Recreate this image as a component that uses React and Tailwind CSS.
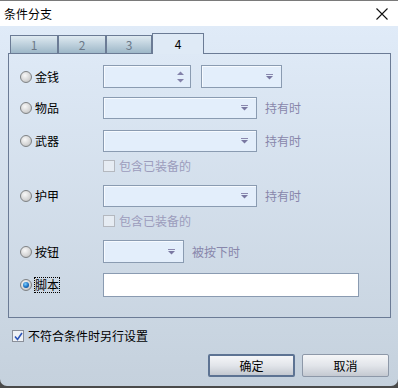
const font = "font-['Noto_Sans_CJK_SC','Microsoft_YaHei',sans-serif]";

function Radio({ checked }) {
  return (
    <span className="relative w-[12px] h-[12px] rounded-full border border-[#7f8284] bg-[radial-gradient(circle_at_40%_35%,#f8f8f8_0%,#d4d4d4_60%,#b0b0b0_100%)] flex items-center justify-center">
      {checked && (
        <span className="w-[6px] h-[6px] rounded-full bg-[radial-gradient(circle_at_40%_35%,#7fd0ff_0%,#1a6fc0_55%,#0c3d7a_100%)]" />
      )}
    </span>
  );
}

function Arrow() {
  return (
    <svg width="9" height="6" viewBox="0 0 9 6" className="shrink-0">
      <rect x="1" y="0" width="7" height="1" fill="#8a88ae" />
      <path d="M1 2 L8 2 L4.5 5.5 Z" fill="#7a78a2" />
    </svg>
  );
}

function Dropdown({ w }) {
  return (
    <div
      className={`${w} h-full border border-[#8a9bb1] bg-[#e3eefb] shadow-[inset_1px_1px_0_#f6faff] flex items-center justify-end pr-[7px]`}
    >
      <Arrow />
    </div>
  );
}

function Spinner() {
  return (
    <div className="w-[88px] h-full border border-[#8a9bb1] bg-[#e3eefb] shadow-[inset_1px_1px_0_#f6faff] flex flex-col items-end justify-center pr-[6px] gap-[4px]">
      <svg width="7" height="4" viewBox="0 0 7 4">
        <path d="M0 4 L7 4 L3.5 0.5 Z" fill="#8482aa" />
      </svg>
      <svg width="7" height="4" viewBox="0 0 7 4">
        <path d="M0 0 L7 0 L3.5 3.5 Z" fill="#8482aa" />
      </svg>
    </div>
  );
}

function Hint({ children }) {
  return <span className="text-[12px] leading-none text-[#8886ab]">{children}</span>;
}

function Row({ label, checked, mt, h, children }) {
  return (
    <div className={`flex items-center ${mt} ${h}`}>
      <div className="w-[94px] pl-[11px] flex items-center gap-[3px] h-full">
        <Radio checked={checked} />
        <span
          className={`text-[12px] leading-[14px] text-black ${
            checked ? 'outline outline-1 outline-dotted outline-black' : ''
          }`}
        >
          {label}
        </span>
      </div>
      <div className="flex items-center h-full gap-[8px]">{children}</div>
    </div>
  );
}

function SubCheck({ mt }) {
  return (
    <div className={`flex items-center ${mt} h-[12px] pl-[94px] gap-[4px]`}>
      <span className="w-[12px] h-[12px] border border-[#b4b8bf] bg-[#e6ecf3]" />
      <span className="text-[12px] leading-none text-[#9c9cbc]">包含已装备的</span>
    </div>
  );
}

function Tab({ w, label, active }) {
  if (active) {
    return (
      <div
        className={`${w} h-[21px] -mb-px relative z-10 border border-b-0 border-[#6b7b95] bg-[#dfeaf6] flex items-center justify-center text-[12px] text-black`}
      >
        {label}
      </div>
    );
  }
  return (
    <div
      className={`${w} h-[18px] border border-b-0 border-[#6b7b95] bg-gradient-to-b from-[#dfeaf1] to-[#9db7c8] flex items-center justify-center text-[12px] text-[#6b7888]`}
    >
      {label}
    </div>
  );
}

function Button({ label, primary }) {
  return (
    <div
      className={`w-[87px] h-[23px] rounded-[2px] flex items-center justify-center text-[12px] text-black bg-gradient-to-b from-[#f5f6f8] via-[#e2e5ea] to-[#c4c9d1] ${
        primary ? 'border-2 border-[#5d7393]' : 'border border-[#8d98a8]'
      }`}
    >
      {label}
    </div>
  );
}

export default function App() {
  return (
    <div className={`w-[398px] h-[388px] bg-[#4a4a4a] ${font}`}>
      <div className="w-[398px] h-[386px] flex flex-col border-t border-[#7a7a7a] rounded-b-[7px] overflow-hidden">
        <div className="h-[25px] bg-white flex items-center justify-between pl-[4px] pr-[10px]">
          <span className="text-[12px] text-black leading-none">条件分支</span>
          <svg width="12" height="12" viewBox="0 0 12 12">
            <path d="M0.5 0.5 L11.5 11.5 M11.5 0.5 L0.5 11.5" stroke="#111" strokeWidth="1.1" />
          </svg>
        </div>
        <div className="flex-1 bg-gradient-to-b from-[#e0ebf8] to-[#c5d1dd] pl-[8px] pt-[7px] flex flex-col">
          <div className="flex items-end ml-[2px] h-[20px]">
            <Tab w="w-[48px]" label="1" />
            <Tab w="w-[48px]" label="2" />
            <Tab w="w-[46px]" label="3" />
            <Tab w="w-[52px]" label="4" active />
          </div>
          <div className="w-[383px] h-[265px] border border-[#6b7b95] flex flex-col">
            <Row label="金钱" mt="mt-[11px]" h="h-[23px]">
              <Spinner />
              <div className="ml-[2px] h-full flex">
                <Dropdown w="w-[81px]" />
              </div>
            </Row>
            <Row label="物品" mt="mt-[9px]" h="h-[22px]">
              <Dropdown w="w-[154px]" />
              <Hint>持有时</Hint>
            </Row>
            <Row label="武器" mt="mt-[11px]" h="h-[22px]">
              <Dropdown w="w-[154px]" />
              <Hint>持有时</Hint>
            </Row>
            <SubCheck mt="mt-[8px]" />
            <Row label="护甲" mt="mt-[13px]" h="h-[22px]">
              <Dropdown w="w-[154px]" />
              <Hint>持有时</Hint>
            </Row>
            <SubCheck mt="mt-[8px]" />
            <Row label="按钮" mt="mt-[13px]" h="h-[23px]">
              <Dropdown w="w-[81px]" />
              <Hint>被按下时</Hint>
            </Row>
            <Row label="脚本" checked mt="mt-[10px]" h="h-[24px]">
              <div className="w-[256px] h-full border border-[#8a9bb1] bg-white" />
            </Row>
          </div>
          <div className="flex items-center gap-[4px] ml-[4px] mt-[12px] h-[12px]">
            <span className="w-[12px] h-[12px] border border-[#8a8f99] bg-[#eef1f5] flex items-center justify-center">
              <svg width="9" height="9" viewBox="0 0 9 9">
                <path d="M1 4.5 L3.5 7.5 L8 1" stroke="#2c55b8" strokeWidth="1.6" fill="none" />
              </svg>
            </span>
            <span className="text-[12px] leading-none text-black">不符合条件时另行设置</span>
          </div>
          <div className="flex gap-[7px] ml-[200px] mt-[12px]">
            <Button label="确定" primary />
            <Button label="取消" />
          </div>
        </div>
      </div>
    </div>
  );
}
